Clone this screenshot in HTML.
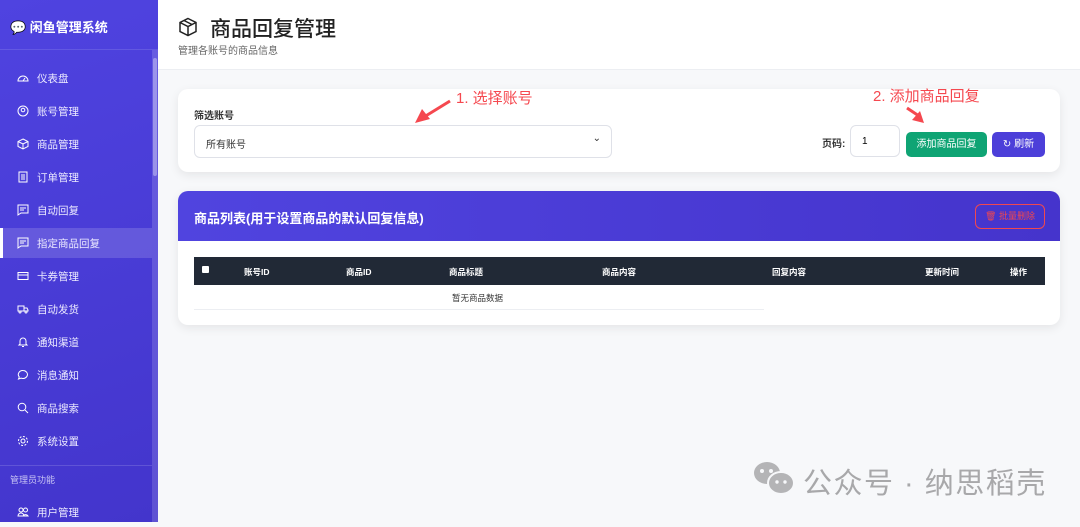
<!DOCTYPE html>
<html><head><meta charset="utf-8"><style>
*{box-sizing:border-box;margin:0;padding:0}
body{width:1080px;height:522px;overflow:hidden;font-family:"Liberation Sans","Noto Sans CJK SC",sans-serif;background:#f7f8fa;position:relative}
.sb{position:absolute;left:0;top:0;width:158px;height:522px;background:linear-gradient(160deg,#4f43e0,#4335cc);color:#fff}
.logo{height:50px;border-bottom:1px solid rgba(255,255,255,.12);font-weight:bold;font-size:13px;padding:17px 0 0 10px}
.it{position:absolute;left:0;width:152px;height:30px;font-size:10.5px;color:#eceaff;padding:8px 0 0 37px}
.it svg{position:absolute;left:17px;top:9px}
.act{background:rgba(255,255,255,.15);border-left:3px solid #fff}
.scr{position:absolute;left:152px;top:50px;width:6px;height:472px;background:rgba(255,255,255,.15)}
.scr div{position:absolute;left:1px;top:8px;width:4px;height:118px;background:rgba(255,255,255,.35);border-radius:2px}
.hd{position:absolute;left:158px;top:0;width:922px;height:70px;background:#fff;border-bottom:1px solid #eceef2}
.card{position:absolute;left:178px;width:882px;background:#fff;border-radius:10px;box-shadow:0 3px 10px rgba(0,0,0,.08)}
.red{position:absolute;color:#f5484f;font-size:15px}
.th{position:absolute;top:75px;font-size:8.5px;color:#fff;font-weight:bold;white-space:nowrap}
</style></head><body>
<div class="sb">
<div class="logo">💬 闲鱼管理系统</div>
<div class="it" style="top:63px"><svg width="12" height="12" viewBox="0 0 12 12" fill="none" stroke="#fff"><path d="M1 9a5 5 0 0 1 10 0zM6 9l2-3"/></svg>仪表盘</div>
<div class="it" style="top:96px"><svg width="12" height="12" viewBox="0 0 12 12" fill="none" stroke="#fff"><circle cx="6" cy="6" r="5"/><circle cx="6" cy="5" r="1.8"/></svg>账号管理</div>
<div class="it" style="top:129px"><svg width="12" height="12" viewBox="0 0 12 12" fill="none" stroke="#fff"><path d="M6 1l5 2.5v5L6 11 1 8.5v-5zM1 3.5 6 6l5-2.5M6 6v5"/></svg>商品管理</div>
<div class="it" style="top:162px"><svg width="12" height="12" viewBox="0 0 12 12" fill="none" stroke="#fff"><rect x="2" y="1" width="8" height="10"/><path d="M4 4h4M4 6h4M4 8h4"/></svg>订单管理</div>
<div class="it" style="top:195px"><svg width="12" height="12" viewBox="0 0 12 12" fill="none" stroke="#fff"><path d="M1 1h10v8H4l-3 2zM3 4h6M3 6h4"/></svg>自动回复</div>
<div class="it act" style="top:228px;padding-left:34px"><svg width="12" height="12" viewBox="0 0 12 12" fill="none" stroke="#fff" style="left:14px"><path d="M1 1h10v8H4l-3 2zM3 4h6M3 6h4"/></svg>指定商品回复</div>
<div class="it" style="top:261px"><svg width="12" height="12" viewBox="0 0 12 12" fill="none" stroke="#fff"><rect x="1" y="2.5" width="10" height="7"/><path d="M1 5h10"/></svg>卡券管理</div>
<div class="it" style="top:294px"><svg width="12" height="12" viewBox="0 0 12 12" fill="none" stroke="#fff"><path d="M1 3h6v5H1zM7 5h3l1 2v1H7"/><circle cx="3" cy="9" r="1"/><circle cx="9" cy="9" r="1"/></svg>自动发货</div>
<div class="it" style="top:327px"><svg width="12" height="12" viewBox="0 0 12 12" fill="none" stroke="#fff"><path d="M3 8V5a3 3 0 0 1 6 0v3l1 1H2zM5 10.5h2"/></svg>通知渠道</div>
<div class="it" style="top:360px"><svg width="12" height="12" viewBox="0 0 12 12" fill="none" stroke="#fff"><path d="M6 1.5a4.5 4 0 1 1-2 7.6L1.5 10l.8-2A4.5 4 0 0 1 6 1.5z"/></svg>消息通知</div>
<div class="it" style="top:393px"><svg width="12" height="12" viewBox="0 0 12 12" fill="none" stroke="#fff"><circle cx="5" cy="5" r="3.8"/><path d="M8 8l3 3"/></svg>商品搜索</div>
<div class="it" style="top:426px"><svg width="12" height="12" viewBox="0 0 12 12" fill="none" stroke="#fff"><circle cx="6" cy="6" r="2"/><circle cx="6" cy="6" r="4.5" stroke-dasharray="2 1.5"/></svg>系统设置</div>
<div style="position:absolute;top:465px;left:0;width:152px;border-top:1px solid rgba(255,255,255,.15)"></div>
<div style="position:absolute;top:473px;left:10px;font-size:9px;color:#c9c5f5">管理员功能</div>
<div class="it" style="top:497px"><svg width="12" height="12" viewBox="0 0 12 12" fill="none" stroke="#fff"><circle cx="4" cy="4" r="2"/><circle cx="8.5" cy="4" r="2"/><path d="M1 10a3 3 0 0 1 6 0zM6 10a3 3 0 0 1 5 0z"/></svg>用户管理</div>
<div class="scr"><div></div></div>
</div>
<div class="hd">
<svg style="position:absolute;left:20px;top:17px" width="20" height="20" viewBox="0 0 20 20" fill="none" stroke="#222" stroke-width="1.5"><path d="M10 1.5l8 4v9l-8 4-8-4v-9zM2 5.5l8 4 8-4M10 9.5v9M6 3.5l8 4"/></svg>
<div style="position:absolute;left:52px;top:13px;font-size:21px;color:#222;font-weight:500">商品回复管理</div>
<div style="position:absolute;left:20px;top:42px;font-size:10px;color:#666">管理各账号的商品信息</div>
</div>
<div class="card" style="top:89px;height:83px">
<div style="position:absolute;left:16px;top:18px;font-size:10px;font-weight:bold;color:#333">筛选账号</div>
<div style="position:absolute;left:16px;top:36px;width:418px;height:33px;border:1px solid #dfe1e8;border-radius:6px;font-size:10px;color:#333;padding:10px 0 0 11px">所有账号<span style="position:absolute;right:10px;top:7px;font-size:10px">⌄</span></div>
<div style="position:absolute;left:644px;top:46px;font-size:10px;font-weight:bold;color:#333">页码:</div>
<div style="position:absolute;left:672px;top:36px;width:50px;height:32px;border:1px solid #dfe1e8;border-radius:6px;font-size:10px;padding:10px 0 0 11px">1</div>
<div style="position:absolute;left:728px;top:43px;width:81px;height:25px;background:#0fa474;border-radius:5px;color:#fff;font-size:10px;text-align:center;line-height:25px">添加商品回复</div>
<div style="position:absolute;left:814px;top:43px;width:53px;height:25px;background:#4c3fd9;border-radius:5px;color:#fff;font-size:10px;text-align:center;line-height:25px">↻ 刷新</div>
</div>
<div class="card" style="top:191px;height:134px;overflow:hidden">
<div style="height:50px;background:linear-gradient(90deg,#5044df,#4534cc);color:#fff;font-size:13px;font-weight:bold;padding:17px 0 0 16px">商品列表(用于设置商品的默认回复信息)</div>
<div style="position:absolute;left:797px;top:13px;width:70px;height:25px;border:1.5px solid #f0484f;border-radius:6px;color:#f0484f;font-size:9px;text-align:center;line-height:22px">🗑 批量删除</div>
<div style="position:absolute;left:16px;top:66px;width:851px;height:28px;background:#212936"></div>
<div style="position:absolute;left:24px;top:75px;width:7px;height:7px;background:#fff;border-radius:1px"></div>
<div class="th" style="left:66px">账号ID</div>
<div class="th" style="left:168px">商品ID</div>
<div class="th" style="left:271px">商品标题</div>
<div class="th" style="left:424px">商品内容</div>
<div class="th" style="left:594px">回复内容</div>
<div class="th" style="left:747px">更新时间</div>
<div class="th" style="left:832px">操作</div>
<div style="position:absolute;left:274px;top:101px;font-size:8.5px;color:#333">暂无商品数据</div>
<div style="position:absolute;left:16px;top:118px;width:570px;border-top:1px solid #eceef2"></div>
</div>
<div class="red" style="left:456px;top:87px">1. 选择账号</div>
<svg style="position:absolute;left:410px;top:98px" width="45" height="28" viewBox="0 0 45 28"><path d="M40 3 14 19" stroke="#f5484f" stroke-width="3"/><path d="M5 25l7-14 8 10z" fill="#f5484f"/></svg>
<div class="red" style="left:873px;top:85px">2. 添加商品回复</div>
<svg style="position:absolute;left:905px;top:106px" width="24" height="20" viewBox="0 0 24 20"><path d="M2 2l12 8" stroke="#f5484f" stroke-width="3"/><path d="M19 17l-12-3 8-9z" fill="#f5484f"/></svg>
<svg style="position:absolute;left:753px;top:461px" width="42" height="34" viewBox="0 0 42 34"><ellipse cx="14" cy="12" rx="13" ry="11" fill="#b4b4b6"/><ellipse cx="28" cy="22" rx="13" ry="11" fill="#b4b4b6" stroke="#f7f8fa" stroke-width="2"/><circle cx="9" cy="10" r="2" fill="#f7f8fa"/><circle cx="18" cy="10" r="2" fill="#f7f8fa"/><circle cx="24" cy="21" r="1.7" fill="#f7f8fa"/><circle cx="32" cy="21" r="1.7" fill="#f7f8fa"/></svg>
<div style="position:absolute;left:803px;top:460px;font-size:29px;color:#a8a8aa;letter-spacing:1.5px">公众号 · 纳思稻壳</div>
</body></html>
